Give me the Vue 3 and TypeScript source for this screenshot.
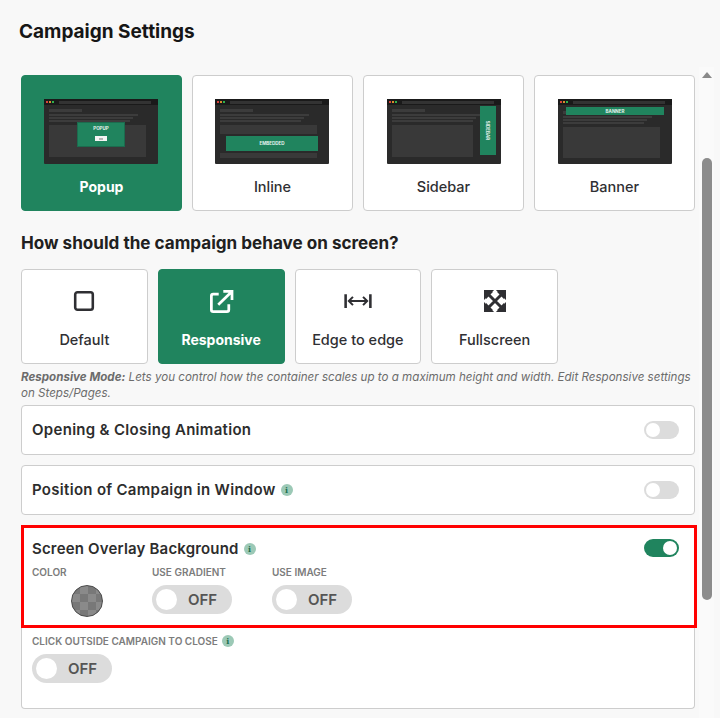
<script setup lang="ts">
interface Layout { key: string; label: string; active?: boolean }
interface Mode { key: string; label: string; active?: boolean }
const layouts: Layout[] = [
  { key: 'popup', label: 'Popup', active: true },
  { key: 'inline', label: 'Inline' },
  { key: 'sidebar', label: 'Sidebar' },
  { key: 'banner', label: 'Banner' },
]
const modes: Mode[] = [
  { key: 'default', label: 'Default' },
  { key: 'responsive', label: 'Responsive', active: true },
  { key: 'edge', label: 'Edge to edge' },
  { key: 'full', label: 'Fullscreen' },
]
const subOptions = ['USE GRADIENT', 'USE IMAGE']
</script>

<template>
  <div class="page">
    <h1 class="title">Campaign Settings</h1>
    <div class="body">
      <main class="content">
        <div class="layouts">
          <button v-for="l in layouts" :key="l.key" class="card layout" :class="{ active: l.active }">
            <div class="mini" :class="l.key">
              <div class="mini-bar">
                <i class="dot r"></i><i class="dot o"></i><i class="dot g"></i>
                <i class="addr"></i>
              </div>
              <div class="mini-body">
                <div class="ln head"></div>
                <div class="ln l1"></div>
                <div class="ln l2"></div>
                <div class="ln l3"></div>
                <template v-if="l.key === 'inline'">
                  <div class="blk small"></div>
                  <div class="embed"><span>EMBEDDED</span></div>
                  <div class="blk foot"></div>
                </template>
                <div v-else class="blk"></div>
                <div v-if="l.key === 'popup'" class="pop">
                  <span>POPUP</span>
                  <b class="pop-btn"></b>
                </div>
                <div v-if="l.key === 'sidebar'" class="side"><span>SIDEBAR</span></div>
                <div v-if="l.key === 'banner'" class="ban"><span>BANNER</span></div>
              </div>
            </div>
            <span class="layout-label">{{ l.label }}</span>
          </button>
        </div>

        <h2 class="subtitle">How should the campaign behave on screen?</h2>

        <div class="modes">
          <button v-for="m in modes" :key="m.key" class="card mode" :class="{ active: m.active }">
            <svg class="mode-icon" viewBox="0 0 24 24" aria-hidden="true">
              <rect v-if="m.key === 'default'" x="2.400" y="2.400" width="19.200" height="19.200" rx="2.500" fill="none" stroke="currentColor" stroke-width="2.800" />
              <g v-else-if="m.key === 'responsive'" fill="none" stroke="currentColor" stroke-width="3">
                <path d="M9.500 4.500H3.500A2 2 0 0 0 1.500 6.500v15a2 2 0 0 0 2 2h15a2 2 0 0 0 2-2V15.500" />
                <path d="M9 16 23 2.500M14.500 1.500h9.500v9.500" />
              </g>
              <g v-else-if="m.key === 'edge'" fill="none" stroke="currentColor" stroke-width="2.200">
                <path d="M-1.500 4.500v15M25.500 4.500v15" stroke-width="2.800" />
                <path d="M2 12h20M6.500 7.500 2 12l4.500 4.500M17.500 7.500 22 12l-4.500 4.500" />
              </g>
              <g v-else>
                <path fill="currentColor" d="M0 0h11L8 3H3v5L0 11zM24 0v11l-3-3V3h-5l-3-3zM24 24H13l3-3h5v-5l3-3zM0 24V13l3 3v5h5l3 3z" />
                <path fill="currentColor" d="M2 2h8L2 10zM22 2v8l-8-8zM22 22h-8l8-8zM2 22v-8l8 8z" />
                <path fill="none" stroke="currentColor" stroke-width="3.200" d="M3 3l18 18M21 3 3 21" />
              </g>
            </svg>
            <span class="mode-label">{{ m.label }}</span>
          </button>
        </div>

        <p class="hint"><strong>Responsive Mode:</strong> Lets you control how the container scales up to a maximum height and width. Edit Responsive settings on Steps/Pages.</p>

        <section class="panel row">
          <span class="panel-title">Opening &amp; Closing Animation</span>
          <span class="switch"><i></i></span>
        </section>
        <section class="panel row">
          <span class="panel-title">Position of Campaign in Window <i class="info">i</i></span>
          <span class="switch"><i></i></span>
        </section>

        <section class="panel overlay">
          <div class="highlight">
            <div class="hl-head">
              <span class="panel-title">Screen Overlay Background <i class="info">i</i></span>
              <span class="switch on"><i></i></span>
            </div>
            <div class="options">
              <div class="option">
                <span class="cap">COLOR</span>
                <span class="swatch"></span>
              </div>
              <div v-for="o in subOptions" :key="o" class="option">
                <span class="cap">{{ o }}</span>
                <span class="pill"><i></i><b>OFF</b></span>
              </div>
            </div>
          </div>
          <div class="outside">
            <span class="cap">CLICK OUTSIDE CAMPAIGN TO CLOSE <i class="info small">i</i></span>
            <span class="pill"><i></i><b>OFF</b></span>
          </div>
        </section>
      </main>

      <aside class="scrollbar">
        <span class="arrow"></span>
        <span class="thumb"></span>
      </aside>
    </div>
  </div>
</template>

<style>
html, body { margin: 0; background: #f8f8f8; }
</style>

<style scoped>
* { box-sizing: border-box; }
.page {
  width: 720px;
  height: 718px;
  overflow: hidden;
  background: #f8f8f8;
  color: #2d2d2d;
  font-family: Inter, "Noto Sans", sans-serif;
}
.title {
  margin: 0;
  padding: 20px 0 0 19px;
  height: 67px;
  font-size: 19px;
  line-height: 23px;
  font-weight: 700;
  color: #161616;
}
.body { display: flex; height: 651px; }
.content { width: 699px; padding: 8px 0 0 21px; flex: none; }
.card {
  display: flex;
  flex-direction: column;
  align-items: center;
  padding: 0;
  border: 1px solid #cdcdcd;
  border-radius: 4px;
  background: #fff;
  color: #2f2f33;
  font-family: inherit;
}
.card.active { background: #20845e; border-color: #20845e; color: #fff; }
.layouts { display: flex; gap: 10px; }
.layout { width: 161px; height: 136px; padding-top: 23px; }
.layout-label { margin-top: 14px; font-size: 14.500px; line-height: 18px; font-weight: 500; }
.layout.active .layout-label { font-size: 14px; font-weight: 700; }

.mini { width: 114px; height: 65px; background: #2a2a2a; border-radius: 1px; display: flex; flex-direction: column; flex: none; }
.mini.popup, .mini.inline { margin-left: -1px; }
.mini.sidebar, .mini.banner { margin-left: 1px; }
.mini-bar { height: 6px; background: #1a1a1a; display: flex; align-items: center; padding: 0 2px; gap: 1px; flex: none; }
.dot { width: 2px; height: 2px; }
.dot.r { background: #d8423a; }
.dot.o { background: #d98a2b; }
.dot.g { background: #2fb14b; margin-right: 4px; }
.addr { width: 92px; height: 3px; background: #333; }
.mini-body { position: relative; flex: 1; padding: 4px 5px 0; display: flex; flex-direction: column; align-items: flex-start; }
.ln { height: 2px; background: #3c3c3c; margin-bottom: 1px; width: 89px; }
.ln.head { width: 33px; height: 3px; margin-bottom: 2px; }
.ln.l2 { width: 84px; }
.ln.l3 { width: 81px; margin-bottom: 3px; }
.blk { width: 97px; height: 32px; background: #393939; }
.blk.small { height: 9px; }
.blk.foot { height: 5px; }
.embed { width: 92px; height: 15px; margin: 2px 0 2px 6px; background: #20845e; display: flex; align-items: center; justify-content: center; }
.embed span, .pop span, .side span, .ban span { color: #e4f2ec; font-size: 4.500px; line-height: 5px; font-weight: 700; }
.pop { position: absolute; left: 33px; top: 17px; width: 48px; height: 25px; background: #20845e; border: 1px solid #1c6b4e; display: flex; flex-direction: column; align-items: center; padding-top: 3px; gap: 5px; }
.pop-btn { width: 12px; height: 5px; background: #f4f4f4; display: flex; align-items: center; justify-content: center; }
.pop-btn::after { content: ""; width: 4px; height: 2px; background: #b5b5b5; }
.side { position: absolute; right: 5px; top: 1px; width: 16px; height: 49px; background: #20845e; display: flex; align-items: center; justify-content: center; }
.side span { transform: rotate(90deg); white-space: nowrap; }
.sidebar .ln.l1 { width: 100px; }
.sidebar .blk { width: 81px; }
.banner .mini-body { padding-top: 6px; }
.banner .blk { height: 31px; }
.ban { position: absolute; left: 8px; top: 2px; width: 98px; height: 8px; background: #20845e; display: flex; align-items: center; justify-content: center; }

.subtitle { margin: 21px 0 0; font-size: 17.100px; line-height: 22px; font-weight: 700; color: #202020; }
.modes { display: flex; gap: 10px; margin-top: 15px; }
.mode { width: 126.750px; height: 95px; padding-top: 20px; }
.mode-icon { width: 22px; height: 22px; overflow: visible; flex: none; }
.mode-label { margin-top: 19px; font-size: 14.500px; line-height: 18px; font-weight: 500; }
.mode.active .mode-label { font-size: 14px; font-weight: 700; }
.hint { margin: 5px 0 0; width: 674px; font-size: 11.600px; line-height: 16px; font-style: italic; color: #6c6c6c; }
.hint strong { font-weight: 700; }

.panel { width: 674px; background: #fff; border: 1px solid #cdcdcd; border-radius: 4px; }
.row { height: 50px; margin-top: 10px; display: flex; align-items: center; justify-content: space-between; padding: 0 15px 0 10px; }
.hint + .row { margin-top: 4px; }
.panel-title { font-size: 15px; line-height: 20px; font-weight: 600; letter-spacing: 0.300px; color: #2d2d2d; display: inline-flex; align-items: center; gap: 5px; }
.highlight .panel-title { letter-spacing: 0.180px; }
.info { width: 12px; height: 12px; border-radius: 50%; background: #9cc9b6; color: #1d6f50; font: 700 8px/12px "DejaVu Serif", serif; letter-spacing: 0; text-align: center; display: inline-block; }
.switch { width: 35px; height: 18px; border-radius: 9px; background: #dcdcdc; display: flex; align-items: center; padding: 0 2px; }
.switch i { width: 14px; height: 14px; border-radius: 50%; background: #fff; display: block; }
.switch.on { background: #20845e; justify-content: flex-end; }
.overlay { height: 184px; margin-top: 10px; border-top: none; border-top-left-radius: 0; border-top-right-radius: 0; }
.highlight { width: 676px; height: 103px; margin: 1px 0 0 -1px; border: 3px solid #ff0000; padding: 9px 15px 0 8px; }
.hl-head { display: flex; justify-content: space-between; align-items: center; height: 24px; }
.hl-head .switch { margin-bottom: 3px; }
.options { display: flex; gap: 10px; margin-top: 5px; }
.option { width: 110px; display: flex; flex-direction: column; align-items: flex-start; }
.option:first-child .swatch { align-self: center; }
.cap { font-size: 10px; line-height: 12px; font-weight: 600; color: #7c7c7c; display: inline-flex; align-items: center; gap: 4px; }
.swatch {
  width: 32px; height: 32px; margin-top: 7px; border-radius: 50%; border: 1px solid #4a4a4a;
  background: repeating-conic-gradient(#8a8a8a 0 25%, #787878 0 50%) 0 0 / 16px 16px;
}
.pill { width: 80px; height: 29px; margin-top: 7px; border-radius: 15px; background: #dcdcdc; display: flex; align-items: center; padding-left: 4px; }
.pill i { width: 21px; height: 21px; border-radius: 50%; background: #fff; display: block; }
.pill b { margin-left: 11px; font-size: 15px; font-weight: 600; color: #555; }
.outside { padding: 7px 0 0 10px; display: flex; flex-direction: column; align-items: flex-start; }
.info.small { width: 12px; height: 12px; }

.scrollbar { width: 15px; height: 651px; background: #fafafa; position: relative; flex: none; display: flex; flex-direction: column; align-items: center; }
.arrow { margin-top: 5px; width: 0; height: 0; border-left: 5px solid transparent; border-right: 5px solid transparent; border-bottom: 6px solid #8a8a8a; }
.thumb { width: 10px; height: 442px; margin-top: 80px; border-radius: 5px; background: #8c8c8c; }
</style>
